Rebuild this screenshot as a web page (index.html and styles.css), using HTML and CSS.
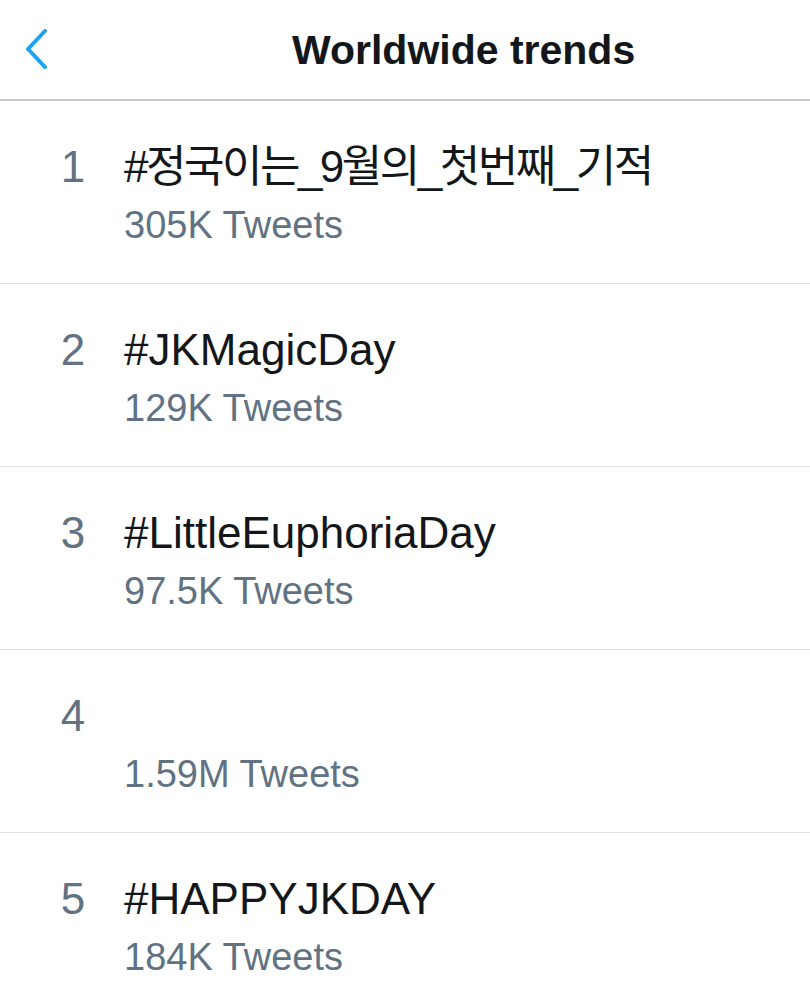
FILE: index.html
```html
<!DOCTYPE html>
<html lang="ko">
<head>
<meta charset="utf-8">
<title>Worldwide trends</title>
<link rel="stylesheet" href="styles.css">
</head>
<body>
<header class="topbar">
  <svg class="back" width="22" height="40" viewBox="0 0 22 40" aria-hidden="true">
    <polyline points="19,2 2,20 19,38" fill="none" stroke="#1da1f2" stroke-width="4" stroke-linecap="round" stroke-linejoin="round"/>
  </svg>
  <h1 class="title">Worldwide trends</h1>
</header>
<ul class="trends">
  <li class="trend">
    <span class="rank">1</span>
    <div class="info">
      <div class="name name-ko">#정국이는_9월의_첫번째_기적</div>
      <div class="count">305K Tweets</div>
    </div>
  </li>
  <li class="trend">
    <span class="rank">2</span>
    <div class="info">
      <div class="name">#JKMagicDay</div>
      <div class="count">129K Tweets</div>
    </div>
  </li>
  <li class="trend">
    <span class="rank">3</span>
    <div class="info">
      <div class="name">#LittleEuphoriaDay</div>
      <div class="count">97.5K Tweets</div>
    </div>
  </li>
  <li class="trend">
    <span class="rank">4</span>
    <div class="info">
      <div class="name">&nbsp;</div>
      <div class="count">1.59M Tweets</div>
    </div>
  </li>
  <li class="trend">
    <span class="rank">5</span>
    <div class="info">
      <div class="name">#HAPPYJKDAY</div>
      <div class="count">184K Tweets</div>
    </div>
  </li>
</ul>
</body>
</html>
```

FILE: styles.css
```css
html, body {
  margin: 0;
  padding: 0;
  background: #ffffff;
}
body {
  font-family: "Liberation Sans", Arial, "Noto Sans CJK KR", sans-serif;
  color: #14171a;
}
.topbar {
  display: flex;
  align-items: center;
  height: 99px;
  border-bottom: 2px solid #c3c7d0;
  box-sizing: content-box;
}
.back {
  display: block;
  margin-left: 26px;
  margin-top: -2px;
}
.title {
  margin: 0 0 0 244px;
  font-size: 41px;
  font-weight: 700;
  color: #14171a;
  line-height: 48px;
}
.trends {
  list-style: none;
  margin: 0;
  padding: 0;
}
.trend {
  display: flex;
  align-items: flex-start;
  padding: 40px 0 36px 0;
  border-bottom: 1px solid #dcdfe5;
}
.trend:first-child {
  padding-top: 40px;
}
.rank {
  width: 30px;
  margin-left: 58px;
  text-align: center;
  font-size: 44px;
  line-height: 52px;
  color: #617283;
}
.info {
  margin-left: 36px;
  display: flex;
  flex-direction: column;
}
.name {
  font-size: 44px;
  line-height: 52px;
  color: #14171a;
}
.name-ko {
  letter-spacing: -2.5px;
}
.count {
  margin-top: 10px;
  font-size: 38px;
  line-height: 44px;
  color: #617283;
}
```
